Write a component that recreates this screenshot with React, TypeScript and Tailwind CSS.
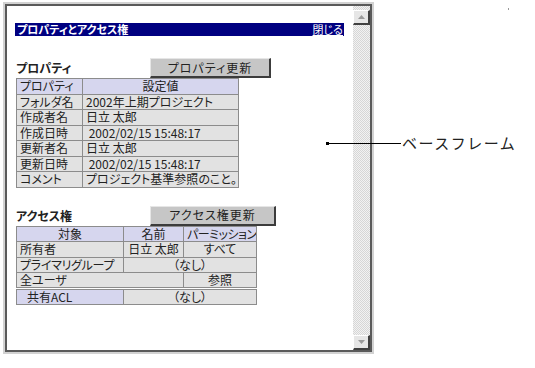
import React from "react";

const cell = "border border-[#8c8c8c] bg-[#e2e2e2] h-[15.5px] px-[3px] py-0 whitespace-nowrap overflow-hidden";
const head = "border border-[#8c8c8c] bg-[#d6d6ee] h-[15.5px] px-[3px] py-0 whitespace-nowrap overflow-hidden";

function Button({ label, width }: { label: string; width: string }) {
  return (
    <div
      className={`${width} h-[20px] flex items-center justify-center bg-[#c6c6c6] border-t border-l border-[#e6e6e6] border-r-2 border-b-2 border-r-[#3c3c3c] border-b-[#3c3c3c] text-[12px] text-[#222] tracking-[1px]`}
    >
      {label}
    </div>
  );
}

function ScrollButton({ down }: { down?: boolean }) {
  return (
    <div className="h-[15px] flex items-center justify-center bg-[#e6e6e6] border-t border-l border-white border-r-2 border-b-2 border-r-[#404040] border-b-[#404040]">
      <svg width="7" height="4" viewBox="0 0 7 4">
        {down ? (
          <polygon points="0,0 7,0 3.5,4" fill="#9a9a9a" />
        ) : (
          <polygon points="0,4 7,4 3.5,0" fill="#9a9a9a" />
        )}
      </svg>
    </div>
  );
}

export default function App() {
  const props = [
    ["フォルダ名", "2002年上期プロジェクト"],
    ["作成者名", "日立 太郎"],
    ["作成日時", " 2002/02/15 15:48:17"],
    ["更新者名", "日立 太郎"],
    ["更新日時", " 2002/02/15 15:48:17"],
    ["コメント", "プロジェクト基準参照のこと。"],
  ];

  return (
    <div className="relative w-[535px] h-[368px] bg-white text-[#222] font-['Noto_Sans_CJK_JP',sans-serif] [font-feature-settings:'palt']">
      <div className="pt-[2px] pl-[3px]">
        <div className="w-[371px] h-[352px] border-2 border-[#d2d2d2]">
          <div className="flex h-full border-2 border-[#5a5a5a]">
            <div className="flex-1 bg-white pl-[8px] pr-[9px] pt-[17px]">
              {/* title bar */}
              <div className="h-[13px] bg-[#000080] flex items-center justify-between pl-[2px] pr-[1px] text-white text-[11px] leading-[13px]">
                <span className="font-bold">プロパティとアクセス権</span>
                <span className="underline">閉じる</span>
              </div>

              {/* properties */}
              <div className="mt-[22px] flex items-end">
                <div className="w-[135px] pl-[1px] pb-[3px] text-[12px] font-bold leading-[14px]">プロパティ</div>
                <Button label="プロパティ更新" width="w-[121px]" />
              </div>
              <table className="ml-[1px] w-[222px] table-fixed border-collapse border border-[#8c8c8c] text-[12px] leading-[14px]">
                <colgroup>
                  <col className="w-[66px]" />
                  <col className="w-[156px]" />
                </colgroup>
                <tbody>
                  <tr>
                    <td className={`${head} text-left`}>プロパティ</td>
                    <td className={`${head} text-center`}>設定値</td>
                  </tr>
                  {props.map(([k, v]) => (
                    <tr key={k}>
                      <td className={cell}>{k}</td>
                      <td className={`${cell} whitespace-pre`}>{v}</td>
                    </tr>
                  ))}
                </tbody>
              </table>

              {/* access rights */}
              <div className="mt-[18px] flex items-end">
                <div className="w-[135px] pl-[1px] pb-[3px] text-[12px] font-bold leading-[14px]">アクセス権</div>
                <Button label="アクセス権更新" width="w-[126px]" />
              </div>
              <table className="ml-[1px] w-[240px] table-fixed border-collapse border border-[#8c8c8c] text-[12px] leading-[14px]">
                <colgroup>
                  <col className="w-[107px]" />
                  <col className="w-[60px]" />
                  <col className="w-[73px]" />
                </colgroup>
                <tbody>
                  <tr>
                    <td className={`${head} text-center`}>対象</td>
                    <td className={`${head} text-center`}>名前</td>
                    <td className={`${head} text-center px-0 tracking-[-0.5px]`}>パーミッション</td>
                  </tr>
                  <tr>
                    <td className={cell}>所有者</td>
                    <td className={`${cell} text-center`}>日立 太郎</td>
                    <td className={`${cell} text-center`}>すべて</td>
                  </tr>
                  <tr>
                    <td className={`${cell} tracking-[-0.3px]`}>プライマリグループ</td>
                    <td className={`${cell} text-center`} colSpan={2}>（なし）</td>
                  </tr>
                  <tr>
                    <td className={cell} colSpan={2}>全ユーザ</td>
                    <td className={`${cell} text-center`}>参照</td>
                  </tr>
                  <tr>
                    <td className={`${head} border-t-[3px] border-double pl-[10px]`}>共有ACL</td>
                    <td className={`${cell} border-t-[3px] border-double text-center`} colSpan={2}>（なし）</td>
                  </tr>
                </tbody>
              </table>
            </div>

            {/* scrollbar */}
            <div className="w-[17px] flex flex-col pt-[4px] bg-[repeating-conic-gradient(#d6d6d6_0_25%,#f2f2f2_0_50%)] bg-[length:2px_2px]">
              <ScrollButton />
              <div className="flex-1" />
              <ScrollButton down />
            </div>
          </div>
        </div>
      </div>

      {/* callout */}
      <div className="absolute left-[326px] top-[142px] w-[3px] h-[3px] bg-black" />
      <div className="absolute left-[328px] top-[143px] w-[73px] h-px bg-black" />
      <div className="absolute left-[402px] top-[134px] text-[15px] leading-[18px] tracking-[1.5px] text-[#222] [font-feature-settings:normal]">
        ベースフレーム
      </div>
      <div className="absolute left-[508px] top-[8px] w-px h-[2px] bg-[#999]" />
    </div>
  );
}
